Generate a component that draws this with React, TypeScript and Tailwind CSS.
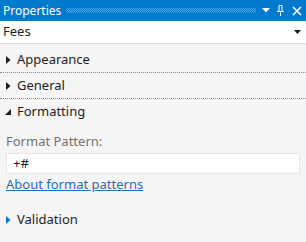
import React from "react";

const font = { fontFamily: '"Segoe UI", "Noto Sans", "Open Sans", sans-serif' };

function Right({ color = "#1e1e1e" }: { color?: string }) {
  return (
    <svg width="5" height="8" viewBox="0 0 5 8" className="shrink-0">
      <path d="M0 0 L4.5 4 L0 8 Z" fill={color} />
    </svg>
  );
}

function Down() {
  return (
    <svg width="6" height="6" viewBox="0 0 6 6" className="shrink-0">
      <path d="M6 0 L6 6 L0 6 Z" fill="#1e1e1e" />
    </svg>
  );
}

function Section({ label, open, blue, dotted }: { label: string; open?: boolean; blue?: boolean; dotted?: boolean }) {
  return (
    <div className={`flex items-center h-[26px] pl-[5px] gap-[6px] ${dotted ? "border-b border-dotted border-[#8a8a8a]" : ""}`}>
      <div className="w-[6px] flex justify-center">{open ? <Down /> : <Right color={blue ? "#007acc" : "#1e1e1e"} />}</div>
      <span className="text-[13px] text-[#1e1e1e]">{label}</span>
    </div>
  );
}

export default function App() {
  return (
    <div className="w-[306px] h-[242px] bg-[#f5f5f5] overflow-hidden" style={font}>
      <div className="h-[21px] bg-[#007acc] flex items-center pl-[3px] pr-[4px]">
        <span className="text-white text-[12px] leading-none">Properties</span>
        <div
          className="flex-1 h-[5px] ml-[5px] mr-[6px]"
          style={{
            backgroundImage: "conic-gradient(#4fa3dd 25%, transparent 0 50%, #4fa3dd 0 75%, transparent 0)",
            backgroundSize: "2px 2px",
          }}
        />
        <svg width="8" height="5" viewBox="0 0 8 5" className="mr-[6px]"><path d="M0 0 H8 L4 4.5 Z" fill="#fff" /></svg>
        <svg width="9" height="11" viewBox="0 0 9 11" className="mr-[7px]" fill="none" stroke="#fff" strokeWidth="1">
          <path d="M3 0.5 V6.5 M6 0.5 V6.5 M3 0.5 H6 M1 6.5 H8 M4.5 6.5 V11" />
        </svg>
        <svg width="10" height="10" viewBox="0 0 10 10" stroke="#fff" strokeWidth="1.6">
          <path d="M1 1 L9 9 M9 1 L1 9" />
        </svg>
      </div>
      <div className="h-[23px] bg-white border-b border-[#dcdcdc] flex items-center pl-[3px] pr-[5px]">
        <span className="flex-1 text-[13px] text-[#1e1e1e]">Fees</span>
        <svg width="7" height="4" viewBox="0 0 7 4"><path d="M0 0 H7 L3.5 4 Z" fill="#1e1e1e" /></svg>
      </div>
      <div className="pt-[3px]">
        <Section label="Appearance" dotted />
        <Section label="General" dotted />
        <Section label="Formatting" open />
      </div>
      <div className="px-[6px] pt-[7px]">
        <div className="text-[13px] text-[#717171] leading-[18px]">Format Pattern:</div>
        <div className="mt-[3px] h-[21px] bg-white border border-[#e6e6e6] flex items-center pl-[6px] text-[13px] text-[#1e1e1e]">+#</div>
        <a className="block text-[13px] leading-[20px] text-[#1e6fb4] underline">About format patterns</a>
      </div>
      <div className="mt-[13px]">
        <Section label="Validation" blue />
      </div>
    </div>
  );
}
